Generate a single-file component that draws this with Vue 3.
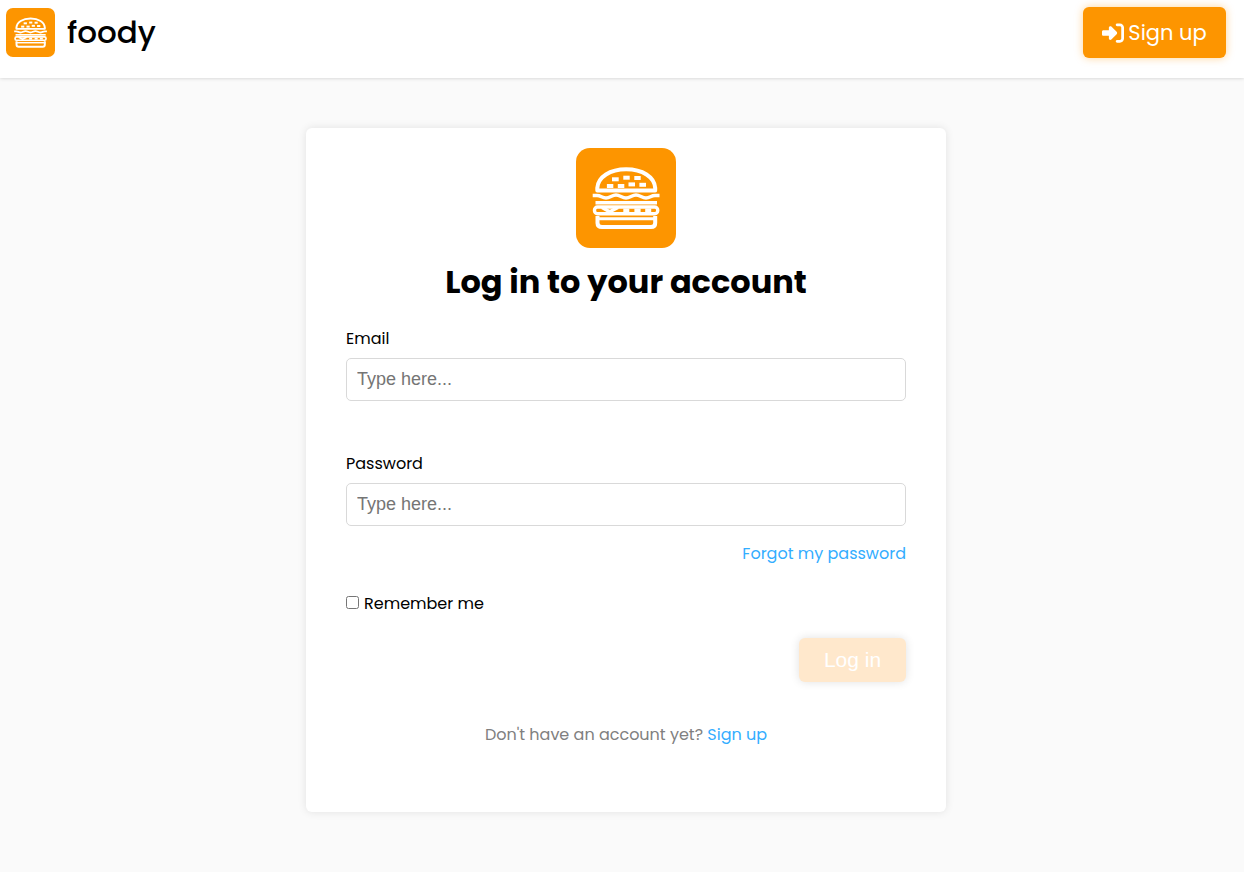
<script setup>
import { ref, computed } from "vue";

const email = ref("");
const password = ref("");
const remember = ref(false);

// The button stays disabled until both fields are filled
const canSubmit = computed(() => email.value !== "" && password.value !== "");

function logIn() {
  if (!canSubmit.value) return;
  console.log("Log in", email.value, remember.value);
}
</script>

<template>
  <!-- Burger shared by both logos -->
  <svg class="sprite" aria-hidden="true">
    <symbol id="burger" viewBox="0 0 100 100">
      <rect width="100" height="100" rx="14" fill="#fd9500" />
      <g fill="none" stroke="#fff" stroke-width="4" stroke-linejoin="round">
        <path d="M21.3 42.6V40C22 29 34 21.3 50.2 21.3S78.500 29 79.2 40V42.6Z" />
        <path stroke-width="3.6" d="M16.7 47.500H21C25 47.500 26 50 30 50S36 47 40 47S46 50 50 50S56 47 60 47S66 50 70 50S75 47.500 79 47.500H83.500" />
        <path stroke-width="3.4" d="M19.500 54.700H81" />
        <rect x="18.500" y="59" width="63.200" height="6.800" rx="3" stroke-width="3.4" />
        <path stroke-width="3.4" d="M26 59.500L33.700 63.700L42 59.500" />
        <path d="M21.500 68V75Q21.500 79 26 79H75Q79.200 79 79.200 75V68" />
        <path stroke-width="3" d="M20 70.800H80.500" />
      </g>
      <g fill="#fff">
        <rect x="36" y="29.300" width="6.700" height="4" />
        <rect x="47.300" y="27.700" width="6.400" height="4" />
        <rect x="58.300" y="28" width="6.400" height="4" />
        <rect x="30.900" y="36" width="6.400" height="4" />
        <rect x="41.800" y="36" width="6.500" height="4" />
        <rect x="52.500" y="34.400" width="6.500" height="4" />
        <rect x="63.400" y="34.800" width="6.600" height="4" />
        <rect x="47.300" y="60.500" width="6" height="4" />
        <rect x="58.400" y="60.500" width="6.200" height="4" />
        <rect x="69.200" y="60.500" width="6" height="4" />
      </g>
    </symbol>
  </svg>

  <header class="header">
    <a class="brand" href="#/">
      <svg class="brand-logo" aria-hidden="true"><use href="#burger" /></svg>
      <span>foody</span>
    </a>
    <button class="sign-up" type="button">
      <svg viewBox="0 0 512 512" aria-hidden="true">
        <path
          d="M217.900 105.900L340.700 228.700c7.200 7.200 11.300 17.100 11.300 27.300s-4.100 20.100-11.300 27.300L217.900 406.100c-6.400 6.400-15 9.900-24 9.900c-18.700 0-33.900-15.200-33.900-33.900V320H32c-17.700 0-32-14.300-32-32v-64c0-17.700 14.300-32 32-32h128v-62.100c0-18.700 15.200-33.900 33.900-33.900c9 0 17.600 3.600 24 9.900zM352 416h64c17.700 0 32-14.300 32-32V128c0-17.700-14.300-32-32-32h-64c-17.700 0-32-14.300-32-32s14.300-32 32-32h64c53 0 96 43 96 96v256c0 53-43 96-96 96h-64c-17.700 0-32-14.300-32-32s14.300-32 32-32z"
        />
      </svg>
      Sign up
    </button>
  </header>

  <main class="main">
    <form class="card" @submit.prevent="logIn">
      <svg class="card-logo" aria-hidden="true"><use href="#burger" /></svg>
      <h1>Log in to your account</h1>

      <div class="field">
        <label for="email">Email</label>
        <input id="email" v-model="email" type="text" placeholder="Type here..." />
      </div>
      <div class="field">
        <label for="password">Password</label>
        <input id="password" v-model="password" type="password" placeholder="Type here..." />
      </div>

      <a class="forgot" href="#/forgot">Forgot my password</a>

      <div class="remember">
        <input id="remember" v-model="remember" type="checkbox" />
        <label for="remember">Remember me</label>
      </div>

      <button class="log-in" type="submit" :disabled="!canSubmit">Log in</button>

      <p class="no-account">Don't have an account yet? <a href="#/signup">Sign up</a></p>
    </form>
  </main>
</template>

<style>
body {
  background: #fafafa;
  color: #000;
  font-family: Poppins, Inter, sans-serif;
  font-size: 16px;
  line-height: 26px;
}
</style>

<style scoped>
* {
  box-sizing: border-box;
}

.sprite {
  position: absolute;
  width: 0;
  height: 0;
}

a {
  color: #33adff;
  text-decoration: none;
}

.header {
  display: flex;
  justify-content: space-between;
  align-items: flex-start;
  height: 78px;
  padding: 7px 18px 0 6px;
  background: #fff;
  box-shadow: 0 0 4px rgba(0, 0, 0, 0.2);
}

.brand {
  display: flex;
  align-items: center;
  gap: 12px;
  color: #000;
  font-size: 31px;
  font-weight: 500;
  line-height: 51px;
}

.brand-logo {
  width: 49px;
  height: 49px;
}

.sign-up {
  display: flex;
  align-items: center;
  justify-content: center;
  gap: 4px;
  width: 143px;
  height: 51px;
  padding: 0;
  border: none;
  border-radius: 6px;
  background: #fd9500;
  box-shadow: 0 0 8px rgba(255, 149, 0, 0.4);
  color: #fff;
  font-family: inherit;
  font-size: 21px;
  cursor: pointer;
}

.sign-up svg {
  width: 22px;
  height: 22px;
  fill: #fff;
}

.main {
  display: flex;
  justify-content: center;
  padding: 50px 0 60px 8px;
}

.card {
  display: flex;
  flex-direction: column;
  width: 100%;
  max-width: 640px;
  padding: 20px 40px 64px;
  border-radius: 6px;
  background: #fff;
  box-shadow: 0 0 8px rgba(0, 0, 0, 0.1);
}

.card-logo {
  align-self: center;
  width: 100px;
  height: 100px;
}

h1 {
  margin: 10px 0 20px;
  font-size: 32px;
  font-weight: 700;
  line-height: 48px;
  text-align: center;
}

.field {
  display: flex;
  flex-direction: column;
  gap: 6px;
}

.field + .field {
  margin: 50px 0 15px;
}

.field input {
  width: 100%;
  height: 43px;
  padding: 0 10px;
  border: 1px solid #d9d9d9;
  border-radius: 5px;
  outline: none;
  background: #fff;
  font-family: "Liberation Sans", Arial, sans-serif;
  font-size: 18px;
}

.field input::placeholder {
  color: #757575;
}

.forgot {
  align-self: flex-end;
}

.remember {
  display: flex;
  align-items: center;
  gap: 5px;
  margin: 24px 0 21px;
}

.remember input {
  width: 13px;
  height: 13px;
  margin: 0 0 3px;
}

.log-in {
  align-self: flex-end;
  width: 107px;
  height: 44px;
  border: none;
  border-radius: 6px;
  background: #fd9500;
  box-shadow: 0 0 10px rgba(0, 0, 0, 0.12);
  color: #fff;
  font-family: "Liberation Sans", Arial, sans-serif;
  font-size: 21px;
  cursor: pointer;
}

.log-in:disabled {
  background: #ffe8cc;
  cursor: default;
}

.no-account {
  margin: 40px 0 0;
  color: #808080;
  text-align: center;
}
</style>
